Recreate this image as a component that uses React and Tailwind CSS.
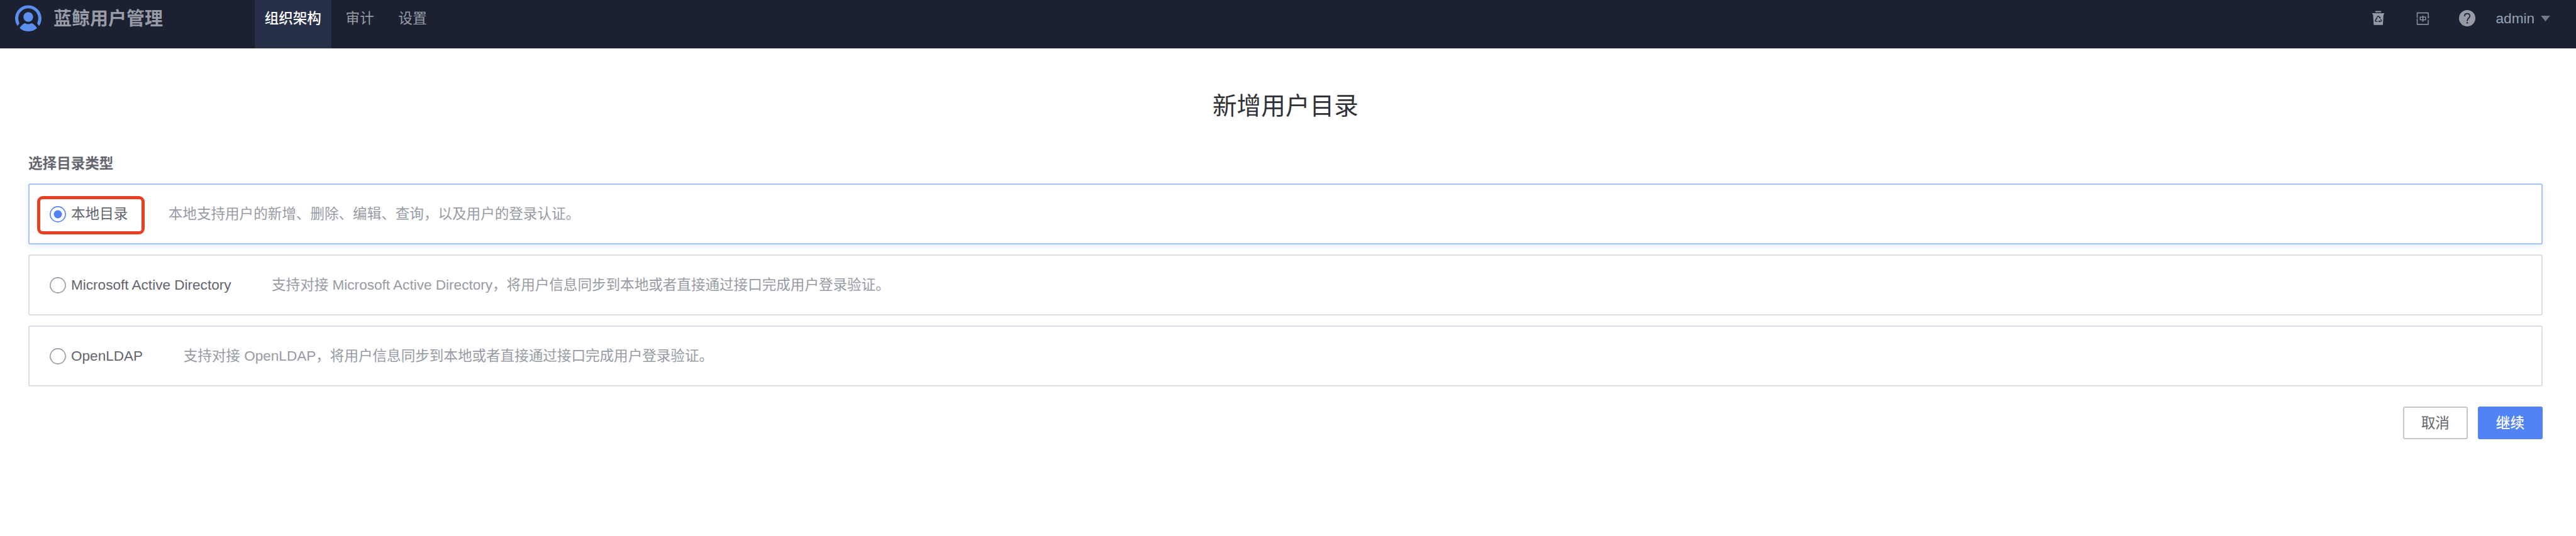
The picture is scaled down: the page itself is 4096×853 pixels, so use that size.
const directories = [
  {
    name: "本地目录",
    text: "本地支持用户的新增、删除、编辑、查询，以及用户的登录认证。",
    checked: true,
  },
  {
    name: "Microsoft Active Directory",
    text: "支持对接 Microsoft Active Directory，将用户信息同步到本地或者直接通过接口完成用户登录验证。",
  },
  {
    name: "OpenLDAP",
    text: "支持对接 OpenLDAP，将用户信息同步到本地或者直接通过接口完成用户登录验证。",
  },
];

function Logo() {
  return (
    <svg viewBox="0 0 52 53" className="ml-[24.2px] h-[42.7px] w-[41.9px] shrink-0" fill="#5a8fee">
      <path d="M4.5 41.2A26 26 0 1 1 47.5 41.2L43.8 37.2Q43.5 35.5 44.6 32.6A19.7 19.7 0 1 0 7.4 32.6Q8.5 35.5 8.2 37.2Z" />
      <circle cx="26" cy="23.6" r="9.6" />
      <path d="M9 45.6Q13 38.6 18.6 36.1Q20 35.6 21.4 36.5Q26 38.8 30.6 36.5Q32 35.6 33.4 36.1Q39 38.6 43.3 45.6A26 26 0 0 1 9 45.6Z" />
    </svg>
  );
}

function TrashIcon() {
  return (
    <svg viewBox="0 0 24 29" className="h-[23.4px] w-[19.3px]">
      <path fill="#979ba5" d="M6.2 0.6H17.6V3H6.2ZM0 5H24V7.2H22.4L21 28.4H3L1.6 7.2H0Z" />
      <path
        d="M9 14.2L11.2 10.6H12.8L15 14.2M16.6 16.8L18.2 19.6L17.2 21.2H13.4M10.6 21.2H6.8L5.8 19.6L8 15.8"
        fill="none"
        stroke="#1b2130"
        strokeWidth="1.7"
      />
      <path fill="#1b2130" d="M16.4 11.8V15.4L12.8 14.2ZM14.6 18.8V23.4L11.8 21.1ZM6.2 15L9.6 14.2L10 17.6Z" />
    </svg>
  );
}

function LanguageIcon() {
  return (
    <svg viewBox="0 0 26 26" className="h-[21px] w-[21px]" fill="none" stroke="#979ba5" strokeWidth="1.7">
      <path d="M1.9 12V1.9H23.6V10.6M23.6 15.4V24.4H1.9V16.2" />
      <path d="M0 16.3H2.7V12.4ZM22.9 13.5V9.6H26Z" fill="#979ba5" stroke="none" />
      <path d="M7.8 10.1H18.4V15.6H7.8ZM13.1 7V19.6" strokeWidth="1.7" />
    </svg>
  );
}

function HelpIcon() {
  return (
    <svg viewBox="0 0 32 32" className="h-[26px] w-[26px]">
      <circle cx="16" cy="16" r="16" fill="#979ba5" />
      <path
        d="M10.8 12.4C10.8 9 13 7 16.1 7C19.2 7 21.3 9 21.3 11.8C21.3 15.4 16.1 16.2 16.1 20.6V21.6"
        fill="none"
        stroke="#1b2130"
        strokeWidth="2.2"
      />
      <circle cx="16.1" cy="25" r="1.5" fill="#1b2130" />
    </svg>
  );
}

function Header() {
  return (
    <header className="flex h-[77.4px] bg-[#1b2130] pb-[19.4px] text-[22.57px] text-[#979ba5]">
      <div className="flex w-[404.6px] items-center">
        <Logo />
        <span className="ml-[19px] pt-[1px] text-[29px] leading-[40px] font-bold">蓝鲸用户管理</span>
      </div>
      <nav className="flex h-[77.4px] leading-[60px]">
        <a className="w-[122.4px] bg-[#282f48] text-center font-medium text-white">组织架构</a>
        <a className="ml-[22.6px] w-[84px]">审计</a>
        <a>设置</a>
      </nav>
      <div className="ml-auto flex items-center pr-[41px]">
        <TrashIcon />
        <span className="ml-[51px] flex">
          <LanguageIcon />
        </span>
        <span className="ml-[47px] flex">
          <HelpIcon />
        </span>
        <span className="ml-[32.5px] pt-[1px] text-[#96a2b9]">admin</span>
        <svg viewBox="0 0 18 11" className="ml-[10px] h-[9px] w-[15px]" fill="#737987">
          <path d="M0 0H18L9 11Z" />
        </svg>
      </div>
    </header>
  );
}

function Radio({ checked }) {
  return (
    <svg viewBox="0 0 26 26" className="mt-[1.5px] size-[26px] shrink-0">
      <circle cx="13" cy="13" r="12.1" fill="#fff" stroke={checked ? "#5183f6" : "#979ba5"} strokeWidth="1.6" />
      {checked && <circle cx="13" cy="13" r="6.5" fill="#5183f6" />}
    </svg>
  );
}

function DirectoryCard({ item }) {
  return (
    <label
      className={
        item.checked
          ? "relative flex h-[97px] items-center rounded-[3px] border-2 border-[#a9c3fa] pl-[32px] shadow-[0_3px_10px_rgba(58,132,255,0.14)]"
          : "relative flex h-[97px] items-center rounded-[3px] border-2 border-[#dcdee5] pl-[32px]"
      }
    >
      {item.checked && (
        <span className="absolute top-[18px] left-[12px] h-[61px] w-[171px] rounded-[9px] border-[5px] border-[#e84025]" />
      )}
      <Radio checked={item.checked} />
      <span className="ml-[8px] pt-[1px] text-[#63656e]">{item.name}</span>
      <span className="ml-[64.5px] pt-[1px] text-[#979ba5]">{item.text}</span>
    </label>
  );
}

export default function App() {
  return (
    <div className="h-[853px] w-[4096px] overflow-hidden bg-white font-['Liberation_Sans','Noto_Sans_CJK_SC',sans-serif] text-[22.57px]">
      <Header />
      <main className="flex flex-col pr-[53px] pl-[45px] text-[#63656e]">
        <h1 className="mt-[61.5px] text-center text-[38.7px] leading-[60px] text-[#313238]">新增用户目录</h1>
        <h2 className="mt-[46.5px] leading-[32px] font-bold">选择目录类型</h2>
        <div className="mt-[14.6px] flex flex-col gap-[15.8px]">
          {directories.map((item) => (
            <DirectoryCard key={item.name} item={item} />
          ))}
        </div>
        <div className="mt-[32px] flex justify-end gap-[16px]">
          <button className="h-[52px] w-[103.2px] rounded-[3px] border-2 border-[#c4c6cc] bg-white pt-[2px]">取消</button>
          <button className="h-[52px] w-[103.2px] rounded-[3px] bg-[#5183f6] pt-[2px] font-medium text-white">继续</button>
        </div>
      </main>
    </div>
  );
}
